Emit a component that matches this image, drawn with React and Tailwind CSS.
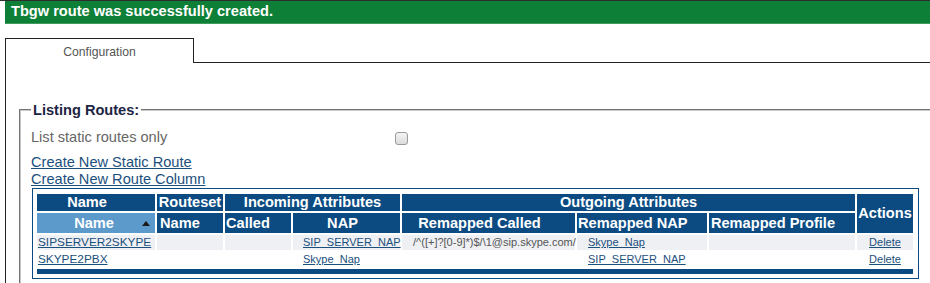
import React from 'react';

const NAVY = 'bg-[#0b4b82]';

const rows = [
    { name: 'SIPSERVER2SKYPE', nap: 'SIP_SERVER_NAP', called: '/^([+]?[0-9]*)$/\\1@sip.skype.com/', rnap: 'Skype_Nap', shade: true },
    { name: 'SKYPE2PBX', nap: 'Skype_Nap', called: '', rnap: 'SIP_SERVER_NAP', shade: false },
];

function Link({ children }) {
    return <a href="#" className="text-[#1b4f7c] underline">{children}</a>;
}

export default function App() {
    return (
        <div className="w-[930px] h-[283px] overflow-hidden bg-white font-['Liberation_Sans',Arial,sans-serif]">
            <div className="h-px bg-[#2e2e2e]" />
            <div className="ml-[5px] h-[23px] bg-[#0e7f37] border-b border-[#3f9a5c] flex items-center pl-[6px] text-[14.6px] font-bold text-white">
                Tbgw route was successfully created.
            </div>

            {/* Tabs */}
            <div className="mt-[14px] ml-[5px] flex">
                <div className="w-[189px] h-[25px] border-t border-l border-r border-[#222] flex justify-center pt-[4px] text-[12.2px] text-[#555]">
                    Configuration
                </div>
                <div className="flex-1 h-[25px] border-b border-[#222]" />
            </div>

            <div className="ml-[5px] border-l border-[#222] pl-[13px] pt-px h-[220px]">
                <fieldset className="mt-[36px] mr-[-40px] border-2 [border-style:groove] border-[#c8c8c8] pl-[10px] pb-4">
                    <legend className="px-[2px] h-[20px] leading-[20px] text-[14.6px] font-bold text-[#1c2544]">Listing Routes:</legend>

                    <div className="mt-[8px] flex items-center h-[20px]">
                        <div className="w-[364px] text-[14.6px] text-[#666]">List static routes only</div>
                        <span className="w-[13px] h-[13px] rounded-[3px] border border-[#9a9a9a] bg-gradient-to-b from-[#f4f4f4] to-[#dcdcdc]" />
                    </div>

                    <div className="mt-[6px] text-[14.6px] leading-[17px] flex flex-col items-start">
                        <Link>Create New Static Route</Link>
                        <Link>Create New Route Column</Link>
                    </div>

                    <div className="ml-px w-[887px] border border-[#0b4b82] pl-[2px] pr-[3px] pt-[3px] pb-[2px]">
                        <table className="table-fixed border-separate border-spacing-[2px] w-[880px] text-[14.6px] text-white font-bold">
                            <colgroup>
                                <col className="w-[118px]" />
                                <col className="w-[66px]" />
                                <col className="w-[66px]" />
                                <col className="w-[107px]" />
                                <col className="w-[173px]" />
                                <col className="w-[130px]" />
                                <col className="w-[146px]" />
                                <col className="w-[56px]" />
                            </colgroup>
                            <thead>
                                <tr className="h-[17px] leading-none">
                                    <th className={`${NAVY} p-0 text-center pr-[18px]`}>Name</th>
                                    <th className={`${NAVY} p-0 text-center`}>Routeset</th>
                                    <th colSpan={2} className={`${NAVY} p-0 text-center`}>Incoming Attributes</th>
                                    <th colSpan={3} className={`${NAVY} p-0 text-center`}>Outgoing Attributes</th>
                                    <th rowSpan={2} className={`${NAVY} p-0 text-center`}>Actions</th>
                                </tr>
                                <tr className="h-[20px] leading-none">
                                    <th className="bg-[#5b9aca] p-0">
                                        <div className="flex items-center">
                                            <span className="flex-1 text-center pl-[9px]">Name</span>
                                            <svg width="8" height="5" viewBox="0 0 8 5" className="mr-[5px]">
                                                <path d="M0 5 L4 0 L8 5 Z" fill="#1a1a1a" />
                                            </svg>
                                        </div>
                                    </th>
                                    <th className={`${NAVY} p-0 pl-[3px] text-left`}>Name</th>
                                    <th className={`${NAVY} p-0 pl-[1px] text-left`}>Called</th>
                                    <th className={`${NAVY} p-0 text-center pr-[8px]`}>NAP</th>
                                    <th className={`${NAVY} p-0 text-center pr-[18px]`}>Remapped Called</th>
                                    <th className={`${NAVY} p-0 text-left pl-[1px]`}>Remapped NAP</th>
                                    <th className={`${NAVY} p-0 text-center pr-[18px]`}>Remapped Profile</th>
                                </tr>
                            </thead>
                            <tbody className="text-[11px] font-normal">
                                {rows.map(r => {
                                    const bg = r.shade ? 'bg-[#eef0f4]' : 'bg-white';
                                    return (
                                        <tr key={r.name} className="h-[15px] leading-none">
                                            <td className={`${bg} p-0 pl-[1px] text-[11.8px]`}><Link>{r.name}</Link></td>
                                            <td className={`${bg} p-0`} />
                                            <td className={`${bg} p-0`} />
                                            <td className={`${bg} p-0 pl-[10px]`}><Link>{r.nap}</Link></td>
                                            <td className={`${bg} p-0 pl-[11px] text-[#555] whitespace-nowrap`}>{r.called}</td>
                                            <td className={`${bg} p-0 pl-[11px]`}><Link>{r.rnap}</Link></td>
                                            <td className={`${bg} p-0`} />
                                            <td className={`${bg} p-0 text-center`}><Link>Delete</Link></td>
                                        </tr>
                                    );
                                })}
                                <tr className="h-[5px]">
                                    <td colSpan={8} className={`${NAVY} p-0`} />
                                </tr>
                            </tbody>
                        </table>
                    </div>
                </fieldset>
            </div>
        </div>
    );
}
